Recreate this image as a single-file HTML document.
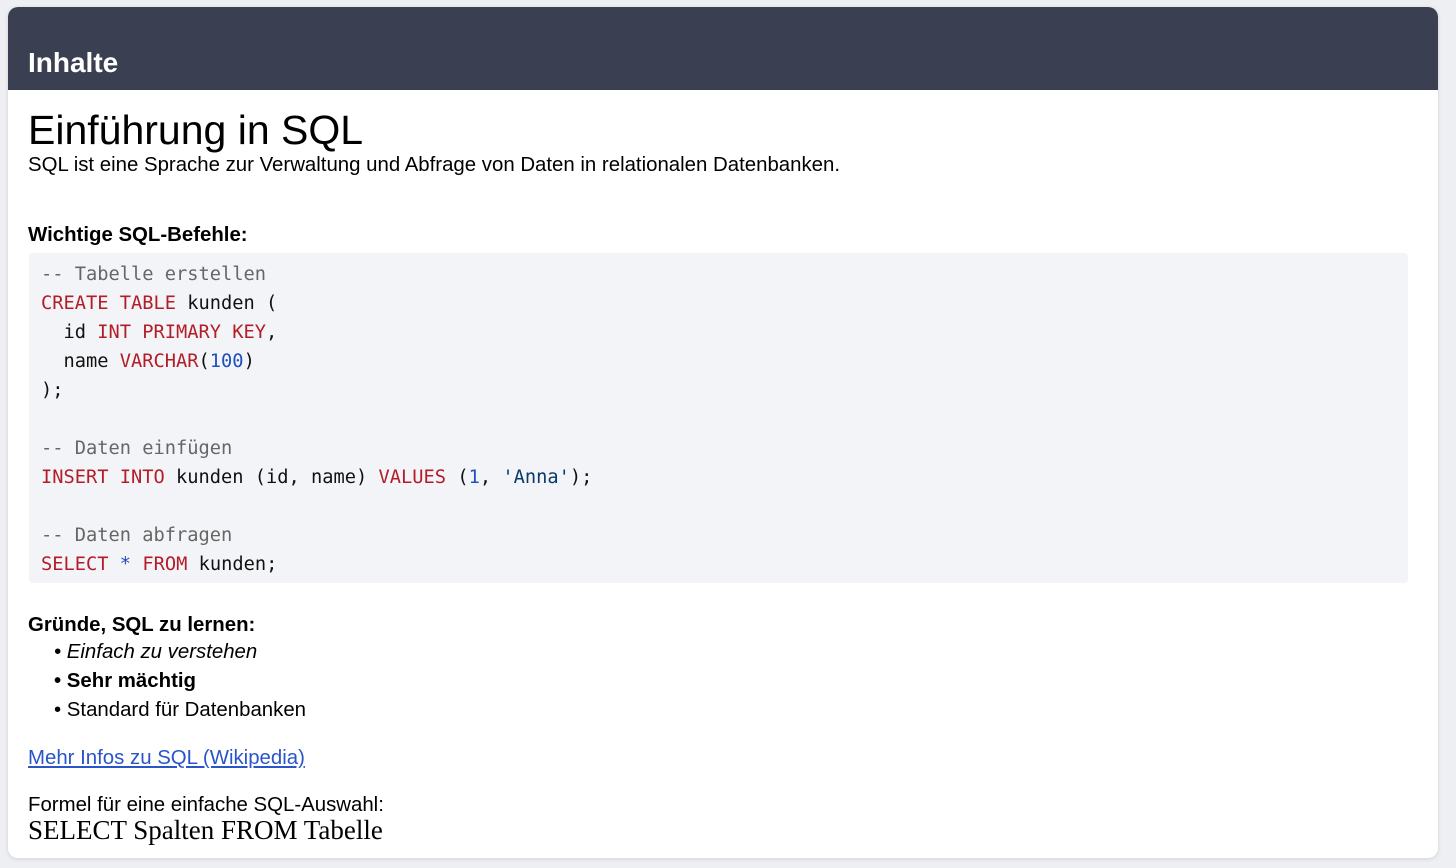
<!DOCTYPE html>
<html><head><meta charset="utf-8"><style>
html,body{margin:0;padding:0;background:#eeeff2;width:1456px;height:868px;overflow:hidden}
body{font-family:"Liberation Sans",Arial,sans-serif;color:#000}
.card{position:absolute;left:8px;top:7px;width:1430px;height:851px;background:#fff;border-radius:10px;overflow:hidden;box-shadow:0 1px 4px rgba(0,0,0,.12)}
.hdr{height:83px;background:#3b3f52;position:relative}
.hdr span{position:absolute;left:20px;top:40px;color:#fff;font-weight:bold;font-size:28px}
h1{position:absolute;left:20px;top:99px;margin:0;font-weight:normal;font-size:41px;line-height:48px}
.p{position:absolute;left:20px;font-size:20.4px;line-height:24px;white-space:nowrap}
.code{position:absolute;left:21px;top:246px;width:1379px;height:330px;background:#f3f4f7;border-radius:4px}
pre{margin:0;position:absolute;left:12px;top:7px;font-family:"DejaVu Sans Mono","Liberation Mono",monospace;font-size:18.7px;line-height:29px;color:#111}
.c{color:#666}.k{color:#b31d28}.n{color:#1f4fbf}
a{color:#2a55c9}
ul{margin:0;padding:0;list-style:none}
li{line-height:29px}
</style></head><body>
<div class="card">
<div class="hdr"><span>Inhalte</span></div>
<h1>Einführung in SQL</h1>
<div class="p" style="top:146px">SQL ist eine Sprache zur Verwaltung und Abfrage von Daten in relationalen Datenbanken.</div>
<div class="p" style="top:216px;font-weight:bold">Wichtige SQL-Befehle:</div>
<div class="code"><pre><span class="c">-- Tabelle erstellen</span>
<span class="k">CREATE TABLE</span> kunden (
  id <span class="k">INT PRIMARY KEY</span>,
  name <span class="k">VARCHAR</span>(<span class="n">100</span>)
);

<span class="c">-- Daten einfügen</span>
<span class="k">INSERT INTO</span> kunden (id, name) <span class="k">VALUES</span> (<span class="n">1</span>, <span style="color:#0a3a6a">'Anna'</span>);

<span class="c">-- Daten abfragen</span>
<span class="k">SELECT</span> <span class="n">*</span> <span class="k">FROM</span> kunden;</pre></div>
<div class="p" style="top:606px;font-weight:bold">Gründe, SQL zu lernen:</div>
<ul class="p" style="top:631px;left:46px">
<li><i>• Einfach zu verstehen</i></li>
<li><b>• Sehr mächtig</b></li>
<li>• Standard für Datenbanken</li>
</ul>
<div class="p" style="top:739px"><a href="#">Mehr Infos zu SQL (Wikipedia)</a></div>
<div class="p" style="top:786px">Formel für eine einfache SQL-Auswahl:</div>
<div class="p" style="top:808px;font-family:'Liberation Serif',serif;font-size:27px;line-height:30px">SELECT Spalten FROM Tabelle</div>
</div>
</body></html>
